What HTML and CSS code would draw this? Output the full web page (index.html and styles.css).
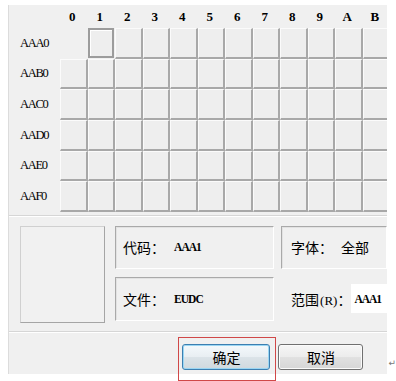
FILE: index.html
```html
<!DOCTYPE html>
<html lang="zh-CN">
<head>
    <meta charset="UTF-8">
    <meta name="viewport" content="width=device-width, initial-scale=1.0">
    <title>选择代码</title>
    <link rel="stylesheet" href="styles.css">
</head>
<body>
    <div class="page">
        <div class="dialog">
            <!-- 字符网格 -->
            <div id="charGrid" class="char-grid"></div>

            <div class="divider grid-divider"></div>

            <!-- 信息区 -->
            <div class="info-panel">
                <div class="preview"></div>
                <div class="info-fields">
                    <div class="field sunken">
                        <span class="cjk">代码：</span><span class="value">AAA1</span>
                    </div>
                    <div class="field sunken font-field">
                        <span class="cjk">字体：</span><span class="cjk value-cjk">全部</span>
                    </div>
                    <div class="field sunken">
                        <span class="cjk">文件：</span><span class="value">EUDC</span>
                    </div>
                    <div class="field range-field">
                        <span class="cjk">范围<span class="paren">(R)</span>：</span>
                        <input class="range-input" type="text" value="AAA1">
                    </div>
                </div>
            </div>

            <div class="divider"></div>

            <!-- 按钮 -->
            <div class="button-bar">
                <button class="btn btn-default">确定</button>
                <button class="btn">取消</button>
            </div>
        </div>
        <span class="para-mark">↵</span>
    </div>

    <div class="highlight"></div>

    <script>
        const columns = ['0', '1', '2', '3', '4', '5', '6', '7', '8', '9', 'A', 'B'];
        const rows = ['AAA0', 'AAB0', 'AAC0', 'AAD0', 'AAE0', 'AAF0'];

        function renderGrid() {
            const grid = document.getElementById('charGrid');

            let html = '<div class="corner"></div>';
            html += columns.map(col => `<div class="col-head">${col}</div>`).join('');

            rows.forEach((row, rowIndex) => {
                html += `<div class="row-label">${row}</div>`;
                columns.forEach((col, colIndex) => {
                    if (rowIndex === 0 && colIndex === 0) {
                        html += '<div class="cell-empty"></div>';
                    } else if (rowIndex === 0 && colIndex === 1) {
                        html += '<div class="cell selected"></div>';
                    } else {
                        html += '<div class="cell"></div>';
                    }
                });
            });

            grid.innerHTML = html;
        }

        renderGrid();
    </script>
</body>
</html>
```

FILE: styles.css
```css
body {
    margin: 0;
    background-color: #fff;
    font-family: 'Liberation Serif', serif;
    color: #000;
}

.page {
    display: flex;
    padding: 5px 0 0 8px;
}

.dialog {
    width: 381px;
    height: 369px;
    background-color: #f0f0f0;
    border-left: 1px solid #dcdcdc;
    overflow: hidden;
}

.para-mark {
    align-self: flex-end;
    font-family: 'DejaVu Sans', sans-serif;
    font-size: 9px;
    color: #777;
    margin: 0 0 6px 1px;
}

/* Grid */
.char-grid {
    display: grid;
    grid-template-columns: 51px repeat(12, 27.5px);
    grid-template-rows: 23px repeat(6, 30.67px);
}

.col-head {
    display: flex;
    align-items: center;
    justify-content: center;
    font-size: 13px;
    font-weight: bold;
    padding-right: 3px;
}

.row-label {
    display: flex;
    align-items: center;
    padding-left: 11px;
    font-size: 12.5px;
    letter-spacing: -1.3px;
}

.cell {
    background-color: #eeeeee;
    border-top: 1px solid #fbfbfb;
    border-left: 1px solid #fbfbfb;
    border-right: 2px solid #a8a8a8;
    border-bottom: 2px solid #a8a8a8;
}

.cell.selected {
    border: 2px solid #9c9c9c;
    box-shadow: inset 1px 1px 0 #ffffff;
    margin: 0 1px 1px 0;
}

.divider {
    border-top: 1px solid #d6d6d6;
    border-bottom: 1px solid #fff;
}

.grid-divider {
    margin-top: 3px;
}

/* Info panel */
.info-panel {
    display: flex;
    gap: 10px;
    padding: 9px 0 8px 11px;
}

.preview {
    width: 84px;
    height: 95px;
    border: 1px solid #d0d0d0;
    border-right-color: #a5a5a5;
    border-bottom-color: #a5a5a5;
    background-color: #f1f1f1;
}

.info-fields {
    flex: 1;
    display: grid;
    grid-template-columns: 159px 1fr;
    grid-template-rows: 43px 44px;
    column-gap: 7px;
    row-gap: 8px;
}

.field {
    display: flex;
    align-items: center;
    padding-left: 7px;
    white-space: nowrap;
}

.sunken {
    border: 1px solid;
    border-color: #a9a9a9 #fff #fff #a9a9a9;
    box-shadow: inset 1px 1px 0 #e2e2e2;
}

.font-field {
    padding-left: 9px;
}

.range-field {
    padding-left: 10px;
}

.cjk {
    font-family: 'Noto Sans CJK SC', sans-serif;
    font-size: 14px;
}

.paren {
    font-family: 'Liberation Serif', serif;
    font-size: 13px;
    margin-left: 1px;
}

.value {
    margin-left: 9px;
    font-size: 11.5px;
    letter-spacing: -1px;
    font-weight: bold;
}

.value-cjk {
    margin-left: 8px;
}

.range-input {
    width: 36px;
    height: 29px;
    flex-shrink: 0;
    box-sizing: border-box;
    margin-left: 0;
    padding: 0 0 0 3px;
    border: none;
    background-color: #fff;
    font-family: 'Liberation Serif', serif;
    font-size: 11.5px;
    font-weight: bold;
    letter-spacing: -1px;
    color: #000;
}

/* Buttons */
.button-bar {
    display: flex;
    justify-content: flex-end;
    gap: 8px;
    padding: 11px 24px 0 0;
}

.btn {
    width: 85px;
    height: 26px;
    border: 1px solid #707070;
    border-radius: 3px;
    background: linear-gradient(#f6f6f6 0%, #ececec 50%, #e1e1e1 51%, #d6d6d6 100%);
    box-shadow: inset 0 0 0 1px #fbfbfb;
    font-family: 'Noto Sans CJK SC', sans-serif;
    font-size: 14px;
    color: #000;
    padding: 0;
}

.btn-default {
    width: 88px;
    border-color: #3c7fb1;
    box-shadow: inset 0 0 0 1px #9ad6f3;
    background: linear-gradient(#f4f9fc 0%, #e8eef2 50%, #dbe3e8 51%, #d0d9de 100%);
}

/* Red annotation */
.highlight {
    position: absolute;
    left: 178px;
    top: 337px;
    width: 96px;
    height: 42px;
    border: 1px solid #d04848;
}
```
